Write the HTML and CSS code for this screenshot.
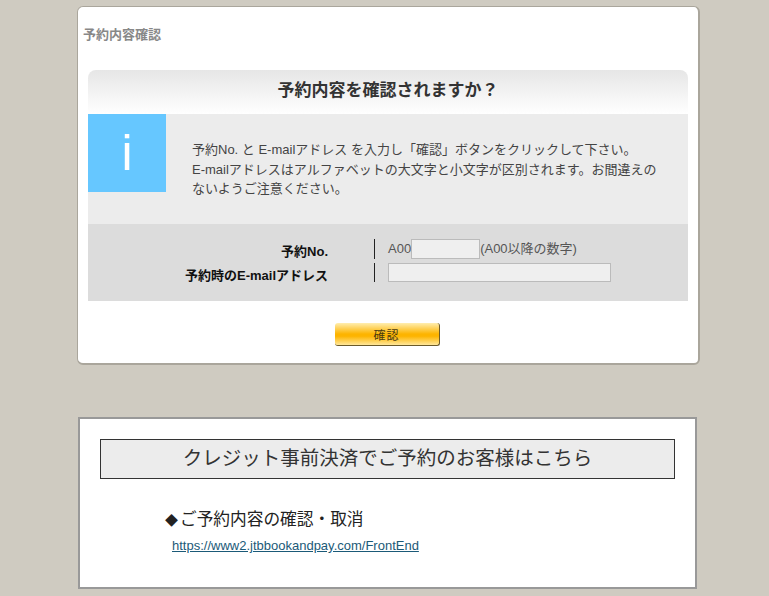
FILE: index.html
```html
<!DOCTYPE html>
<html lang="ja">
<head>
    <meta charset="UTF-8">
    <meta name="viewport" content="width=device-width, initial-scale=1.0">
    <title>予約内容確認</title>
    <link rel="stylesheet" href="styles.css">
</head>
<body>
    <div class="card">
        <h1 class="page-title">予約内容確認</h1>
        <div class="panel">
            <h2 class="panel-head">予約内容を確認されますか？</h2>
            <div class="info">
                <div class="info-icon">i</div>
                <p class="info-text">予約No. と E-mailアドレス を入力し「確認」ボタンをクリックして下さい。<br>E-mailアドレスはアルファベットの大文字と小文字が区別されます。お間違えのないようご注意ください。</p>
            </div>
            <form class="lookup">
                <label class="lookup-label" for="bookingNo">予約No.</label>
                <div class="lookup-value">A00<input class="input-no" type="text" id="bookingNo">(A00以降の数字)</div>
                <label class="lookup-label" for="bookingMail">予約時のE-mailアドレス</label>
                <div class="lookup-value"><input class="input-mail" type="text" id="bookingMail"></div>
            </form>
        </div>
        <div class="actions">
            <button class="confirm" type="button">確認</button>
        </div>
    </div>

    <div class="credit">
        <h2 class="credit-head">クレジット事前決済でご予約のお客様はこちら</h2>
        <p class="credit-sub"><span class="credit-mark">◆</span>ご予約内容の確認・取消</p>
        <a class="credit-link" href="#">https://www2.jtbbookandpay.com/FrontEnd</a>
    </div>
</body>
</html>
```

FILE: styles.css
```css
* {
    padding: 0;
    margin: 0;
    box-sizing: border-box;
}
body {
    background-color: #cfcbc1;
    font-family: "Liberation Sans", Arial, "Noto Sans CJK JP", sans-serif;
    color: #333;
    overflow: hidden;
}
.card {
    width: 623px;
    height: 359px;
    margin: 6px 0 0 77px;
    padding: 0 10px;
    background-color: #fff;
    border: 1px solid #aaa69c;
    border-right-width: 2px;
    border-bottom-width: 2px;
    border-radius: 6px;
}
.page-title {
    height: 63px;
    margin-left: -5px;
    padding-top: 19px;
    font-size: 13px;
    line-height: 18px;
    color: #888;
}
.panel-head {
    height: 44px;
    border-radius: 8px 8px 0 0;
    background: linear-gradient(#e6e6e6, #fff);
    font-size: 17px;
    line-height: 41px;
    text-align: center;
    color: #333;
}
.info {
    display: flex;
    height: 110px;
    background-color: #ececec;
}
.info-icon {
    width: 78px;
    height: 78px;
    background-color: #66c7ff;
    color: #fff;
    font-size: 50px;
    line-height: 78px;
    text-align: center;
}
.info-text {
    width: 496px;
    padding: 26px 0 0 26px;
    font-size: 13px;
    line-height: 19.5px;
    color: #444;
}
.lookup {
    display: grid;
    grid-template-columns: 240px 1fr;
    grid-template-rows: 20px 19px;
    row-gap: 4px;
    height: 77px;
    padding-top: 15px;
    background-color: #dcdcdc;
}
.lookup-label {
    padding-top: 4px;
    font-size: 13px;
    font-weight: bold;
    line-height: 18px;
    text-align: right;
    color: #111;
}
.lookup-value {
    display: flex;
    align-items: flex-start;
    margin-left: 46px;
    padding-left: 13px;
    border-left: 1px solid #222;
    font-size: 13px;
    line-height: 20px;
    color: #555;
}
.lookup-value input {
    height: 100%;
    background-color: #efefef;
    border: 1px solid #bbb;
}
.input-no {
    width: 69px;
}
.input-mail {
    width: 223px;
}
.actions {
    display: flex;
    justify-content: center;
    padding: 22px 2px 0 0;
}
.confirm {
    width: 105px;
    height: 23px;
    background: linear-gradient(#ffeeb0, #fdb400 50%, #fdb400 60%, #ffe79a);
    border: none;
    border-right: 1px solid #6b5a2a;
    border-bottom: 1px solid #6b5a2a;
    border-radius: 3px;
    font-family: inherit;
    font-size: 12px;
    letter-spacing: 1px;
    color: #4a3a10;
}
.credit {
    width: 619px;
    height: 172px;
    margin: 52px 0 0 78px;
    padding: 20px 20px 0;
    background-color: #fff;
    border: 2px solid #999;
}
.credit-head {
    width: 575px;
    height: 40px;
    background-color: #ececec;
    border: 1px solid #333;
    font-size: 19.5px;
    font-weight: normal;
    line-height: 36px;
    text-align: center;
    color: #333;
}
.credit-sub {
    margin: 29px 0 0 65px;
    font-size: 16.7px;
    line-height: 24px;
    color: #222;
}
.credit-mark {
    display: inline-block;
    width: 15px;
    font-size: 13px;
}
.credit-link {
    display: block;
    margin: 5px 0 0 72px;
    font-size: 13px;
    line-height: 16px;
    color: #1b5a78;
}
```
